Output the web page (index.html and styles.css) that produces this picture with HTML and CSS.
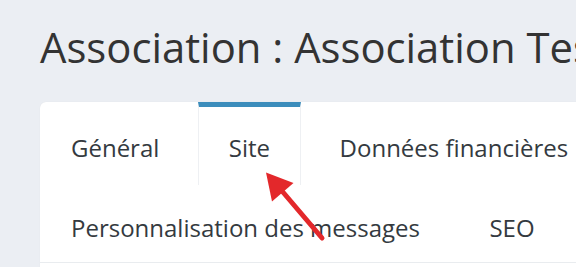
FILE: index.html
```html
<!DOCTYPE html>
<html lang="fr">
<head>
    <meta charset="UTF-8">
    <meta name="viewport" content="width=device-width, initial-scale=1.0">
    <title>Association : Association Test</title>
    <link rel="stylesheet" href="styles.css">
</head>
<body>
    <div class="content">
        <h1 class="page-title">Association : Association Test</h1>

        <div class="card">
            <ul class="tabs">
                <li class="tab">Général</li>
                <li class="tab active">Site</li>
                <li class="tab">Données financières</li>
                <li class="tab">Personnalisation des messages</li>
                <li class="tab">SEO</li>
            </ul>
            <div class="card-body"></div>
        </div>
    </div>

    <!-- flèche d'annotation -->
    <svg class="annotation" width="576" height="267" viewBox="0 0 576 267">
        <line x1="282" y1="191" x2="322" y2="238" stroke="#e3282b" stroke-width="5" stroke-linecap="round"/>
        <polygon points="266,172.5 293.5,183 272,201.5" fill="#e3282b"/>
    </svg>
</body>
</html>
```
FILE: styles.css
```css
html, body {
    margin: 0;
    padding: 0;
    overflow: hidden;
}
body {
    font-family: "Open Sans", "Liberation Sans", sans-serif;
    background-color: #ebeef3;
    color: #343a40;
    width: 576px;
    height: 267px;
    position: relative;
}
.content {
    padding: 22px 0 0 40px;
    width: 700px;
}
.page-title {
    margin: 0 0 30px;
    font-size: 41.8px;
    font-weight: 400;
    line-height: 1.2;
    color: #333;
    white-space: nowrap;
}
.card {
    width: 620px;
    background-color: #fff;
    border-radius: 6px;
    box-shadow: 0 0 1px rgba(0, 0, 0, 0.08);
}
.tabs {
    list-style: none;
    margin: 0;
    padding: 0;
    display: flex;
    flex-wrap: wrap;
    border-bottom: 1px solid #e9ecef;
}
.tab {
    font-size: 24px;
    line-height: 36px;
    height: 80px;
    box-sizing: border-box;
    padding: 22.7px 30px 0;
    margin-right: 7.5px;
    border-top: 5px solid transparent;
    border-left: 1px solid transparent;
    border-right: 1px solid transparent;
    white-space: nowrap;
}
.tab.active {
    border-top-color: #3c8dbc;
    border-left-color: #eef0f3;
    border-right-color: #eef0f3;
    height: 83px;
    margin-bottom: -3px;
}
.card-body {
    height: 120px;
}
.annotation {
    position: absolute;
    left: 0;
    top: 0;
    pointer-events: none;
}
```
